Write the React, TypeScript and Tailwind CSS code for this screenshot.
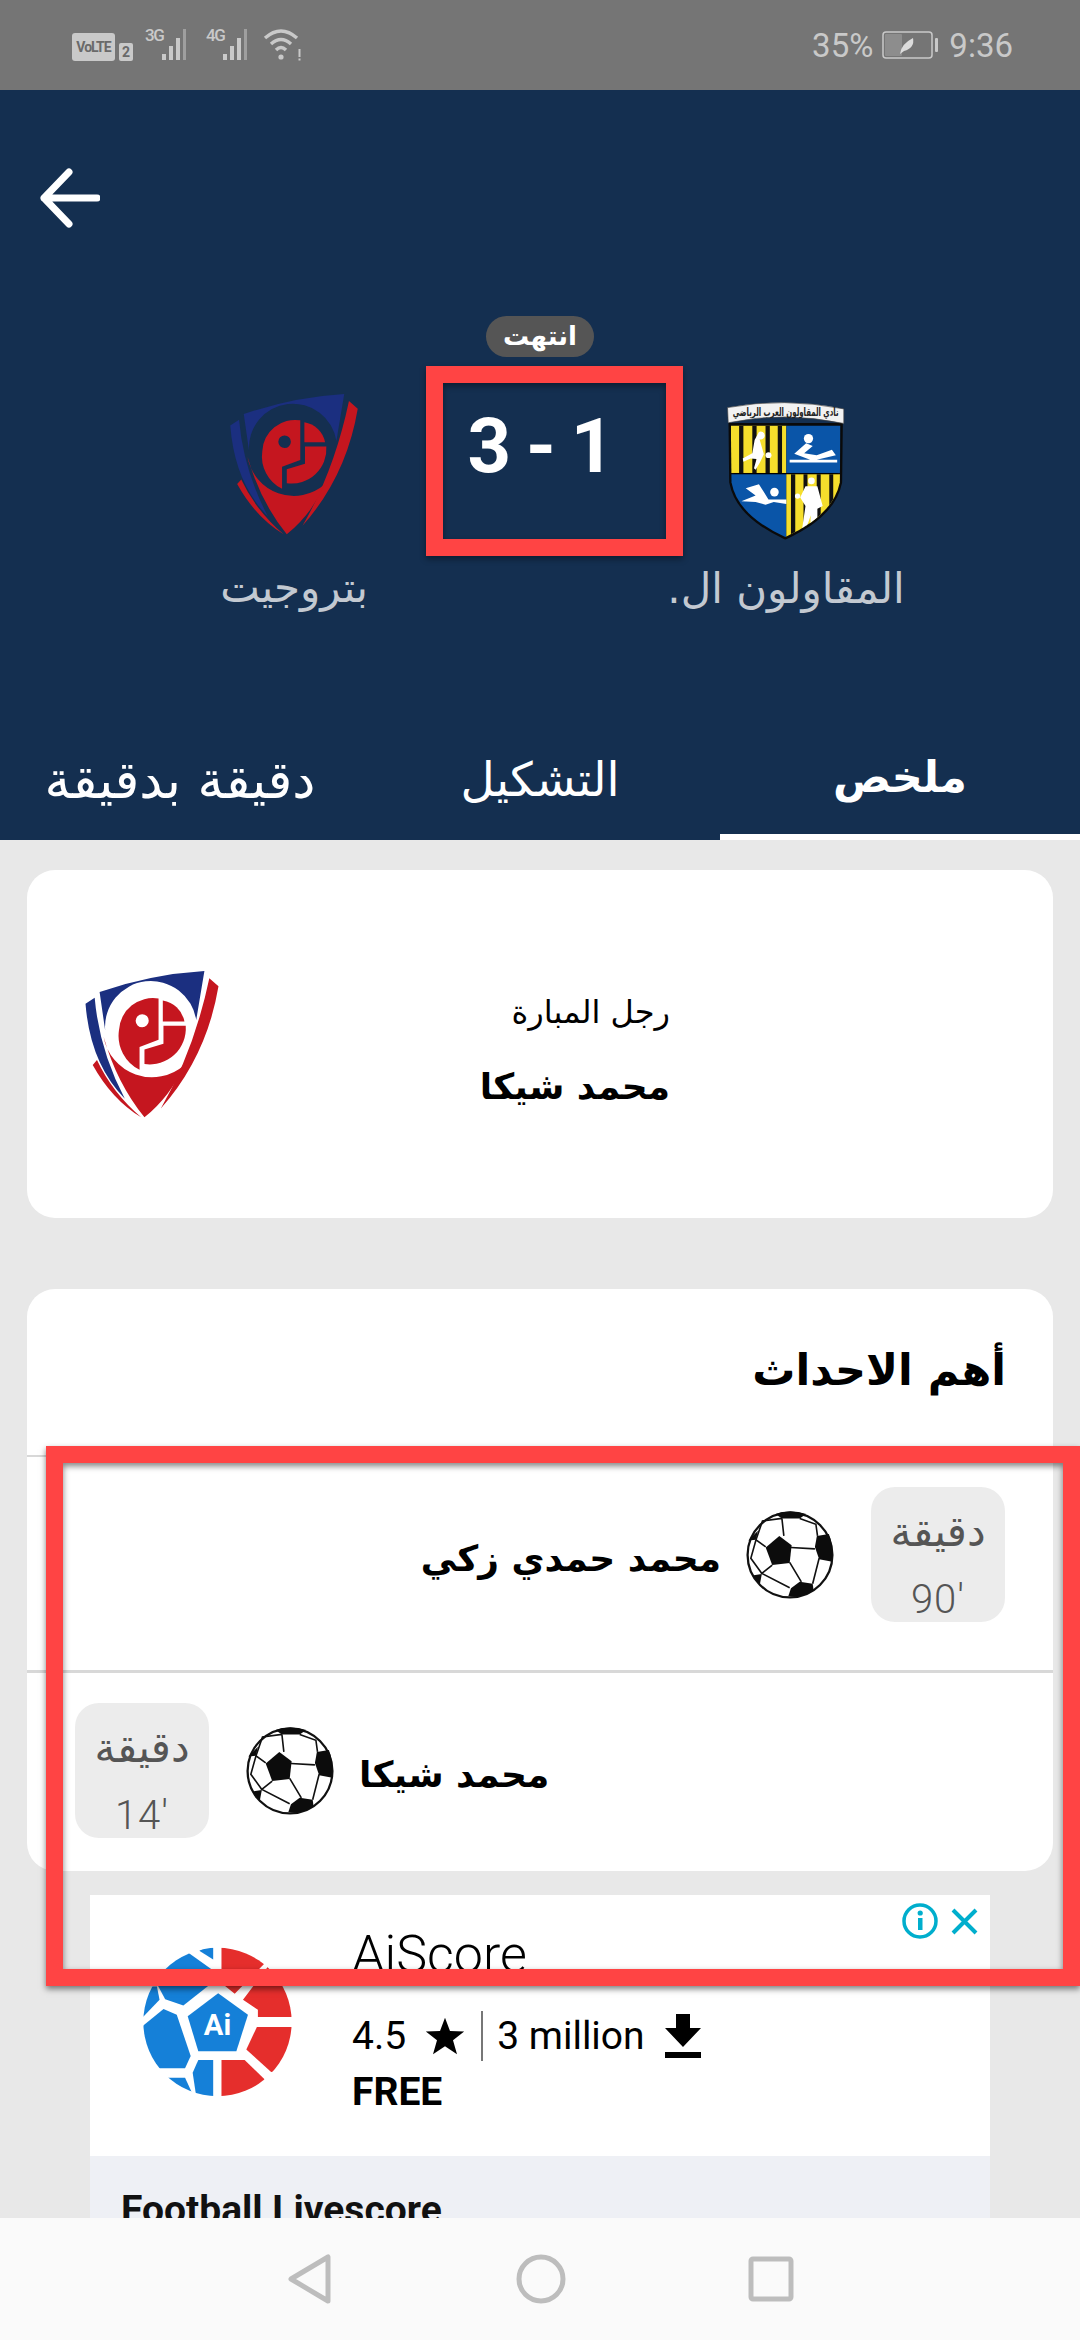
import { useId } from 'react'

const arabic = 'font-["DejaVu_Sans",sans-serif]'
const roboto = 'font-["Roboto",sans-serif]'

function StatusIcons() {
  return (
    <div className={`flex items-end text-[#c9c9c9] ${roboto}`}>
      <div className="w-[43px] h-[28px] rounded-[3px] bg-[#c9c9c9] text-[#6a6a6a] text-[14px] leading-[28px] font-bold text-center tracking-[-1px]">VoLTE</div>
      <div className="ml-[4px] w-[14px] h-[18px] rounded-[2px] bg-[#c9c9c9] text-[#6a6a6a] text-[14px] leading-[18px] font-bold text-center">2</div>
      {['3G', '4G'].map((label, i) => (
        <div key={label} className={`relative w-[50px] h-[32px] ${i === 0 ? 'ml-[12px]' : 'ml-[11px]'}`}>
          <svg width="50" height="32" viewBox="0 0 50 32" className="absolute left-0 top-0" fill="#c9c9c9">
            <rect x="17" y="25" width="4" height="6" />
            <rect x="24" y="17" width="4" height="14" />
            <rect x="31" y="9" width="4" height="22" />
            <rect x="38" y="0" width="3" height="31" opacity="0.5" />
          </svg>
          <span className="absolute left-0 top-[-3px] text-[17px] leading-[18px] font-medium tracking-[-1.5px]">{label}</span>
        </div>
      ))}
      <svg width="40" height="32" viewBox="0 0 40 32" className="ml-[7px]" fill="none" stroke="#c9c9c9" strokeWidth="3.4">
        <path d="M2 9 Q18 -5 34 9" />
        <path d="M8 15 Q18 6 28 15" />
        <path d="M13 21 Q18 16 23 21" />
        <circle cx="18" cy="28" r="2.6" fill="#c9c9c9" stroke="none" />
        <rect x="35.5" y="20" width="2" height="8" fill="#c9c9c9" stroke="none" />
        <rect x="35.5" y="29.5" width="2" height="2" fill="#c9c9c9" stroke="none" />
      </svg>
    </div>
  )
}

function Battery() {
  return (
    <svg width="58" height="30" viewBox="0 0 58 30" fill="none">
      <rect x="1" y="2" width="49" height="26" rx="3" stroke="#c9c9c9" strokeWidth="1.5" />
      <rect x="3" y="4" width="17" height="22" rx="1" fill="#8d8d8d" />
      <rect x="53" y="8" width="3" height="14" rx="1" fill="#c9c9c9" />
      <path d="M18 24 Q19 14 31 8 Q33 18 22 21 Z" fill="#dcdcdc" />
    </svg>
  )
}

function PetrojetLogo({ className }: { className: string }) {
  return (
    <svg viewBox="66 52 414 458" className={className}>
      <path d="M113 122 Q270 68 433 58 L408 208 A140 140 0 0 0 130 240 Z" fill="#1b2f80" />
      <path d="M98 140 L70 158 Q84 340 190 448 Q112 300 98 140 Z" fill="#1b2f80" />
      <path d="M448 80 L476 105 Q440 320 300 478 Q402 300 448 80 Z" fill="#c5161f" />
      <path d="M105 330 L92 345 Q150 450 240 505 Q152 430 105 330 Z" fill="#c5161f" />
      <path d="M125 258 A150 150 0 0 0 372 345 Q330 440 250 505 Q165 400 125 258 Z" fill="#c5161f" />
      <path fillRule="evenodd" fill="#c5161f" d="M293 142 L293 268 L235 290 L235 360 A116 116 0 0 1 172 240 A104 104 0 0 1 293 142 Z M243 190 A20 20 0 1 0 243.1 230 A20 20 0 1 0 243 190 Z" />
      <path d="M306 148 A80 80 0 0 1 372 212 L306 212 Z" fill="#c5161f" />
      <path d="M376 225 A110 110 0 0 1 250 342 L250 298 L308 280 L308 225 Z" fill="#c5161f" />
    </svg>
  )
}

function ContractorsLogo({ className }: { className: string }) {
  const id = useId()
  const shield = 'M90 128 L422 128 L420 300 Q400 400 255 466 Q110 400 92 300 Z'
  return (
    <svg viewBox="74 42 366 436" className={className}>
      <defs>
        <clipPath id={id}>
          <path d={shield} />
        </clipPath>
      </defs>
      <path d={shield} fill="#000" stroke="#0a0a0a" strokeWidth="14" />
      <g clipPath={`url(#${id})`}>
        <rect x="90" y="100" width="168" height="172" fill="#f5de2c" />
        <rect x="258" y="100" width="170" height="172" fill="#0a55a8" />
        <rect x="90" y="276" width="168" height="200" fill="#0a55a8" />
        <rect x="272" y="276" width="160" height="200" fill="#f5de2c" />
        <path d="M115 100 H128 V272 H115 Z M155 100 H168 V272 H155 Z M195 100 H208 V272 H195 Z M232 100 H245 V272 H232 Z" fill="#111" />
        <path d="M272 276 H285 V476 H272 Z M310 276 H322 V476 H310 Z M350 276 H362 V476 H350 Z M388 276 H400 V476 H388 Z" fill="#111" />
        <path d="M258 276 L272 276 L272 476 L258 476 Z" fill="#f5de2c" />
        {/* footballer */}
        <path d="M175 148 a12 12 0 1 1 2 22 L190 215 L178 240 L165 262 L160 258 L168 230 L150 228 L128 238 L126 228 L155 212 L162 172 Z" fill="#fff" />
        <circle cx="204" cy="218" r="9" fill="#fff" />
        {/* rower */}
        <circle cx="325" cy="168" r="14" fill="#fff" />
        <path d="M318 182 L282 214 L330 232 L300 232 L268 232 L268 240 L412 240 L412 232 L350 232 L408 218 L396 202 L350 218 L312 212 L338 190 Z" fill="#fff" />
        {/* swimmer */}
        <circle cx="222" cy="330" r="13" fill="#fff" />
        <path d="M135 318 L175 306 L204 352 L258 352 L258 366 L220 360 L195 368 L165 360 L122 358 L165 340 Z" fill="#fff" />
        {/* basketball player */}
        <circle cx="334" cy="296" r="10" fill="#fff" />
        <path d="M316 312 L352 312 L368 372 L352 380 L352 420 L342 448 L330 448 L332 400 L318 440 L306 440 L316 372 L300 346 Z" fill="#fff" />
        <circle cx="292" cy="342" r="8" fill="#fff" />
      </g>
      <path d="M80 74 Q250 42 432 78 L432 122 Q250 84 82 120 Z" fill="#f2f2f2" stroke="#444" strokeWidth="2" />
      <text x="256" y="100" textAnchor="middle" fontSize="34" fontWeight="700" fill="#222" fontFamily="DejaVu Sans" textLength="320" lengthAdjust="spacingAndGlyphs" dir="rtl">نادي المقاولون العرب الرياضي</text>
    </svg>
  )
}

function Ball({ className }: { className: string }) {
  return (
    <svg viewBox="66 56 278 278" className={`${className} blur-[0.7px]`}>
      <circle cx="205" cy="195" r="131" fill="#fff" stroke="#111" strokeWidth="7" />
      <g fill="#0c0c0c">
        <path d="M130 172 L172 136 L210 165 L204 220 L150 226 Z" />
        <path d="M160 68 Q205 52 255 68 L235 82 L180 82 Z" />
        <path d="M288 136 L325 130 Q342 175 332 215 L295 208 L282 170 Z" />
        <path d="M208 298 L235 278 L275 284 L278 305 Q240 330 200 322 Z" />
        <path d="M76 150 L100 148 L106 120 Z" />
        <path d="M88 258 L118 254 L112 285 Z" />
      </g>
      <g fill="none" stroke="#111" strokeWidth="5">
        <path d="M180 82 L186 136 M235 82 L285 100 L290 136 M208 172 L282 176 M204 218 L240 278 M295 205 L275 284 M150 226 L118 252 L204 296 M130 170 L100 148 L84 205 L118 252 M100 148 L120 90 L180 82" />
      </g>
    </svg>
  )
}

function AiScoreLogo({ className }: { className: string }) {
  const id = useId()
  return (
    <svg viewBox="68 53 450 448" className={className}>
      <defs>
        <clipPath id={id}>
          <circle cx="293" cy="277" r="224" />
        </clipPath>
      </defs>
      <g clipPath={`url(#${id})`}>
        <g fill="#1580d8">
          <path d="M238 62 L280 40 L280 88 Z" />
          <path d="M205 68 L275 118 L275 160 L190 227 L135 208 L112 165 L120 80 Z" />
          <path d="M110 170 L118 210 L60 270 L60 170 Z" />
          <path d="M130 238 L60 295 L60 417 L195 417 L212 380 L170 255 Z" />
          <path d="M140 445 L195 445 L218 495 L140 510 Z" />
          <path d="M235 392 L280 392 L280 510 L230 510 L218 430 Z" />
          <path d="M295 190 L385 255 L350 365 L235 365 L203 260 Z" />
        </g>
        <g fill="#e52e2c">
          <path d="M305 40 L420 40 L435 100 L345 192 L312 165 L305 160 Z" />
          <path d="M445 110 L370 210 L415 240 L415 262 L530 262 L530 110 Z" />
          <path d="M412 292 L530 292 L530 420 L455 428 L380 360 Z" />
          <path d="M305 392 L375 392 L435 450 L420 510 L305 510 Z" />
        </g>
      </g>
      <text x="293" y="315" textAnchor="middle" fontSize="88" fontWeight="700" fill="#fff" fontFamily="Roboto">Ai</text>
    </svg>
  )
}

function EventRow({ name, minute, flip }: { name: string; minute: string; flip?: boolean }) {
  return (
    <div dir={flip ? 'rtl' : 'ltr'} className="flex items-start gap-[36px] px-[48px] pt-[30px]">
      <div className="w-[134px] h-[135px] rounded-[24px] bg-[#ececec] flex flex-col items-center text-[#555]">
        <span dir="rtl" className={`${arabic} text-[42px] leading-[50px] mt-[20px]`}>دقيقة</span>
        <span dir="ltr" className={`${roboto} font-light text-[40px] leading-[46px] mt-[20px] tracking-[1px]`}>{minute}</span>
      </div>
      <div className="flex items-center gap-[24px] mt-[23px]">
        <Ball className="w-[90px] h-[90px] shrink-0" />
        <span dir="rtl" className={`${arabic} font-bold text-black text-[36px] leading-[44px] mt-[8px]`}>{name}</span>
      </div>
    </div>
  )
}

export default function App() {
  return (
    <div className="relative w-[1080px] h-[2340px] overflow-hidden flex flex-col bg-[#e8e8e8]">
      {/* Status bar */}
      <div className="h-[90px] shrink-0 bg-[#757575] flex items-center justify-between pl-[72px] pr-[67px]">
        <StatusIcons />
        <div className={`flex items-center gap-[9px] text-[#c9c9c9] text-[33px] leading-none ${roboto}`}>
          <span>35%</span>
          <Battery />
          <span>9:36</span>
        </div>
      </div>

      {/* Match header */}
      <div className="h-[750px] shrink-0 bg-[#142f50] flex flex-col">
        <div className="pt-[78px] pl-[40px]">
          <svg width="60" height="60" viewBox="0 0 60 60" fill="none" stroke="#fff" strokeWidth="7" strokeLinecap="round" strokeLinejoin="round" className="block">
            <path d="M57 30 H4 M29 4 L4 30 L29 56" />
          </svg>
        </div>

        <div className="flex justify-center mt-[88px]">
          <div className="w-[300px] flex flex-col items-center pt-[76px]">
            <PetrojetLogo className="w-[130px] h-[144px]" />
            <span dir="rtl" className={`${arabic} text-[#c3c9d1] text-[42px] leading-[50px] mt-[27px]`}>بتروجيت</span>
          </div>
          <div className="w-[192px] flex flex-col items-center">
            <div dir="rtl" className={`${arabic} w-[108px] h-[41px] rounded-full bg-[#555555] text-white font-bold text-[26px] leading-[41px] text-center`}>انتهت</div>
            <div className={`${roboto} font-bold text-white text-[76px] leading-[90px] mt-[44px] whitespace-nowrap tracking-[-2px]`}>3 - 1</div>
          </div>
          <div className="w-[300px] flex flex-col items-center pt-[81px]">
            <ContractorsLogo className="w-[122px] h-[144px]" />
            <span dir="rtl" className={`${arabic} text-[#c3c9d1] text-[42px] leading-[50px] mt-[23px] whitespace-nowrap`}>المقاولون ال.</span>
          </div>
        </div>

        <div className={`mt-auto h-[120px] grid grid-cols-3 ${arabic} text-white`}>
          <div dir="rtl" className="flex items-center justify-center text-[52px]">دقيقة بدقيقة</div>
          <div dir="rtl" className="flex items-center justify-center text-[47px]">التشكيل</div>
          <div dir="rtl" className="flex items-center justify-center text-[43px] font-bold border-b-[6px] border-white">ملخص</div>
        </div>
      </div>

      {/* Scrolling content */}
      <div className="flex-1 min-h-0 overflow-hidden px-[27px] pt-[30px]">
        <div className="h-[348px] rounded-[28px] bg-white flex items-center pl-[57px]">
          <PetrojetLogo className="w-[136px] h-[150px] shrink-0" />
          <div dir="rtl" className={`flex-1 pr-[383px] pt-[12px] ${arabic} text-black`}>
            <p className="text-[32px] leading-[40px]">رجل المبارة</p>
            <p className="text-[36px] leading-[44px] font-bold mt-[33px]">محمد شيكا</p>
          </div>
        </div>

        <div className="mt-[71px] rounded-[28px] bg-white h-[582px]">
          <div dir="rtl" className={`h-[168px] border-b-2 border-[#d8d8d8] pr-[47px] pb-[4px] flex items-center ${arabic} font-bold text-black text-[43px]`}>أهم الاحداث</div>
          <div className="h-[216px] border-b-[3px] border-[#d8d8d8]">
            <EventRow name="محمد حمدي زكي" minute="90'" flip />
          </div>
          <EventRow name="محمد شيكا" minute="14'" />
        </div>

        {/* Ad */}
        <div className={`relative mt-[24px] mx-[63px] ${roboto}`}>
          <div className="h-[261px] bg-white flex pl-[53px] pt-[52px] gap-[60px]">
            <AiScoreLogo className="w-[149px] h-[150px] shrink-0" />
            <div className="-mt-[20px] text-black">
              <p className="text-[52px] leading-[56px] font-light">AiScore</p>
              <div className="flex items-center text-[39px] leading-[50px] mt-[28px]">
                <span>4.5</span>
                <svg width="42" height="40" viewBox="0 0 24 24" className="ml-[18px]" fill="#000">
                  <path d="M12 1 L15 9 L23.5 9.3 L16.8 14.6 L19.2 23 L12 18.1 L4.8 23 L7.2 14.6 L.5 9.3 L9 9 Z" />
                </svg>
                <div className="w-[2px] h-[50px] bg-[#777] ml-[15px]" />
                <span className="ml-[14px]">3 million</span>
                <svg width="36" height="44" viewBox="0 0 36 44" className="ml-[20px]" fill="#000">
                  <path d="M11 0 H25 V14 H36 L18 33 L0 14 H11 Z" />
                  <rect x="0" y="38" width="36" height="6" />
                </svg>
              </div>
              <p className="text-[39px] leading-[44px] font-bold mt-[9px]">FREE</p>
            </div>
          </div>
          <div className="h-[120px] bg-[#eef0f5] pl-[31px] pt-[32px]">
            <p className="text-[39px] leading-[44px] font-bold text-[#111]">Football Livescore</p>
          </div>
          <div className="absolute top-[8px] right-[12px] flex items-center gap-[13px]">
            <svg width="36" height="36" viewBox="0 0 36 36" fill="none" stroke="#00aecd" strokeWidth="3.5">
              <circle cx="18" cy="18" r="16" />
              <rect x="16" y="15" width="4.5" height="12" fill="#00aecd" stroke="none" />
              <circle cx="18.2" cy="10" r="2.6" fill="#00aecd" stroke="none" />
            </svg>
            <svg width="27" height="27" viewBox="0 0 27 27" stroke="#00aecd" strokeWidth="4">
              <path d="M2 2 L25 25 M25 2 L2 25" />
            </svg>
          </div>
        </div>
      </div>

      {/* Android nav bar */}
      <div className="h-[122px] shrink-0 bg-[#fafafa] relative z-10">
        <div className="h-full flex items-start pt-[36px] pl-[288px]">
          <svg width="44" height="50" viewBox="0 0 44 50" fill="none" stroke="#bdbdbd" strokeWidth="5" strokeLinejoin="round">
            <path d="M40 3 V47 L3 25 Z" />
          </svg>
          <svg width="50" height="50" viewBox="0 0 50 50" fill="none" stroke="#bdbdbd" strokeWidth="5" className="ml-[184px]">
            <circle cx="25" cy="25" r="22" />
          </svg>
          <svg width="46" height="46" viewBox="0 0 46 46" fill="none" stroke="#bdbdbd" strokeWidth="5" className="ml-[182px] mt-[2px]">
            <rect x="3" y="3" width="40" height="40" rx="2" />
          </svg>
        </div>
      </div>

      {/* Annotation boxes */}
      <div className="absolute left-[426px] top-[366px] w-[257px] h-[190px] border-[17px] border-[#ff4444] shadow-[0_3px_6px_rgba(0,0,0,0.4),inset_0_3px_6px_rgba(0,0,0,0.4)]" />
      <div className="absolute left-[46px] top-[1446px] w-[1034px] h-[540px] border-[17px] border-[#ff4444] shadow-[0_3px_6px_rgba(0,0,0,0.5),inset_0_3px_6px_rgba(0,0,0,0.5)]" />
    </div>
  )
}
